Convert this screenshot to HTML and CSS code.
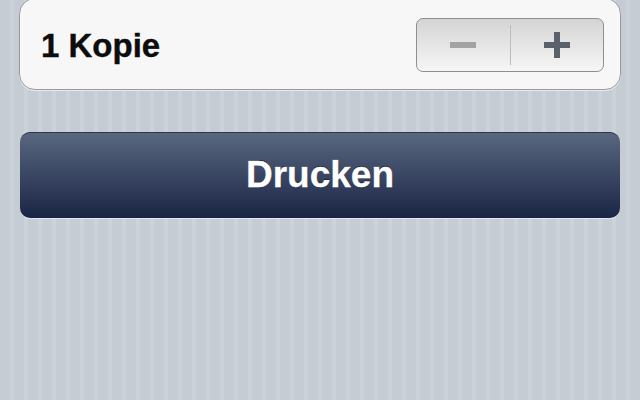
FILE: index.html
```html
<!DOCTYPE html>
<html lang="de">
<head>
<meta charset="utf-8">
<title>Drucken</title>
<link rel="stylesheet" href="styles.css">
</head>
<body>
<div class="page">
  <div class="card">
    <span class="label">1 Kopie</span>
    <div class="stepper">
      <button class="step minus" aria-label="weniger"><span class="bar h"></span></button>
      <span class="divider"></span>
      <button class="step plus" aria-label="mehr"><span class="bar h"></span><span class="bar v"></span></button>
    </div>
  </div>
  <button class="print">Drucken</button>
</div>
</body>
</html>
```
FILE: styles.css
```css
html, body {
  margin: 0;
  padding: 0;
  height: 100%;
}
body {
  background: repeating-linear-gradient(90deg, #c5ccd4 0 10px, #cbd2d9 10px 14px);
  font-family: "Liberation Sans", Arial, sans-serif;
}
.page {
  display: flex;
  flex-direction: column;
  padding: 0 19px 0 19px;
}
.card {
  margin-top: -2px;
  height: 92px;
  box-sizing: border-box;
  border: 1px solid #9a9a9a;
  border-radius: 16px;
  background: #f7f7f7;
  box-shadow: 0 1px 0 #e6e9ed;
  display: flex;
  align-items: center;
  justify-content: space-between;
  padding: 2px 16px 0 21px;
}
.label {
  font-size: 33px;
  font-weight: bold;
  color: #0d0d0d;
  margin-top: 2px;
  -webkit-text-stroke: 0.4px #0d0d0d;
}
.stepper {
  width: 188px;
  height: 54px;
  box-sizing: border-box;
  border: 1px solid #8f8f8f;
  border-radius: 7px;
  background: linear-gradient(#d4d4d4, #f6f6f6);
  display: flex;
  align-items: center;
}
.step {
  flex: 1;
  height: 100%;
  border: 0;
  background: none;
  padding: 0;
  position: relative;
}
.divider {
  width: 1px;
  height: 40px;
  background: #bcbcbc;
}
.bar {
  position: absolute;
  left: 50%;
  top: 50%;
}
.minus .bar.h {
  width: 26px;
  height: 6px;
  margin: -3px 0 0 -13px;
  background: #a3a3a3;
}
.plus .bar.h {
  width: 26px;
  height: 6px;
  margin: -3px 0 0 -13px;
  background: #5a616b;
}
.plus .bar.v {
  width: 6px;
  height: 26px;
  margin: -13px 0 0 -3px;
  background: #5a616b;
}
.print {
  margin: 42px 1px 0 1px;
  height: 86px;
  border: 0;
  border-top: 1px solid #2c3447;
  border-radius: 10px;
  background: linear-gradient(#59677f, #1a2545);
  box-shadow: 0 1px 0 #e4e8ee;
  color: #fff;
  font-family: "Liberation Sans", Arial, sans-serif;
  font-size: 37px;
  font-weight: bold;
  -webkit-text-stroke: 0.3px #fff;
  text-shadow: 0 -1px 0 #1a2135;
  padding: 0 0 2px 0;
}
```
